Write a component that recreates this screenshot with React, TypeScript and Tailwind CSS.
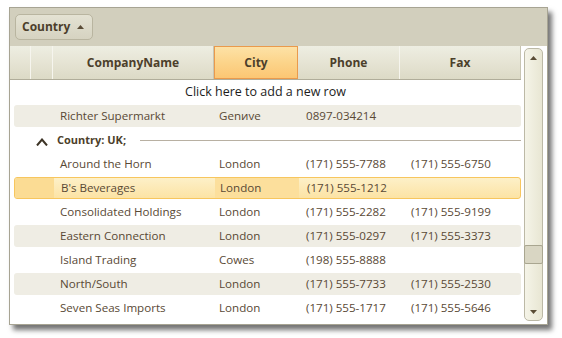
import React from "react";

type Row = { company: string; city: string; phone: string; fax?: string; alt?: boolean; selected?: boolean };

const rows: Row[] = [
  { company: "Around the Horn", city: "London", phone: "(171) 555-7788", fax: "(171) 555-6750" },
  { company: "B's Beverages", city: "London", phone: "(171) 555-1212", selected: true },
  { company: "Consolidated Holdings", city: "London", phone: "(171) 555-2282", fax: "(171) 555-9199" },
  { company: "Eastern Connection", city: "London", phone: "(171) 555-0297", fax: "(171) 555-3373", alt: true },
  { company: "Island Trading", city: "Cowes", phone: "(198) 555-8888" },
  { company: "North/South", city: "London", phone: "(171) 555-7733", fax: "(171) 555-2530", alt: true },
  { company: "Seven Seas Imports", city: "London", phone: "(171) 555-1717", fax: "(171) 555-5646" },
];

const font = { fontFamily: '"Open Sans", "Noto Sans", sans-serif' };

function DataRow({ row }: { row: Row }) {
  let inner = "flex h-[22px] items-center rounded-[3px]";
  if (row.alt) inner += " bg-[#efede4]";
  if (row.selected) inner += " border border-[#f7c65e] bg-gradient-to-b from-[#fdf0c8] to-[#fce3a4]";
  return (
    <div className="h-[24px] py-[1px] pl-[4px]">
      <div className={inner}>
        <div className={`h-full w-[39px] shrink-0 ${row.selected ? "bg-[#fbdc94] rounded-l-[2px]" : ""}`} />
        <div className="w-[161px] shrink-0 pl-[7px] whitespace-nowrap">{row.company}</div>
        <div className={`h-full w-[84px] shrink-0 flex items-center pl-[5px] ${row.selected ? "bg-[#fcdf9c]" : ""}`}>{row.city}</div>
        <div className="w-[102px] shrink-0 pl-[8px] whitespace-nowrap">{row.phone}</div>
        <div className="flex-1 pl-[11px] whitespace-nowrap">{row.fax ?? ""}</div>
      </div>
    </div>
  );
}

export default function App() {
  return (
    <div className="w-[562px] h-[338px] bg-white pl-[9px] pt-[7px]" style={font}>
      <div className="w-[539px] h-[318px] border border-[#a7a493] bg-white flex flex-col shadow-[4px_5px_5px_rgba(0,0,0,0.55)]">
        {/* group panel */}
        <div className="h-[38px] bg-[#d2cfbd] flex items-center px-[5px] shrink-0">
          <div className="h-[26px] w-[78px] rounded-[5px] border border-[#b9b5a0] bg-gradient-to-b from-[#e4e2d3] to-[#d6d3c1] flex items-center pl-[6px] gap-[7px] text-[12px] font-bold text-[#4c3f2b]">
            <span>Country</span>
            <svg width="7" height="4" viewBox="0 0 7 4"><path d="M0 4 L3.5 0 L7 4 Z" fill="#5a4c36" /></svg>
          </div>
        </div>
        <div className="flex flex-1 min-h-0 bg-[#d2cfbd]">
          <div className="w-[511px] flex flex-col bg-white">
            {/* header */}
            <div className="h-[34px] flex border-b border-[#b0ad9a] bg-gradient-to-b from-[#eeeee2] via-[#e6e4d4] to-[#dcdac6] text-[12px] font-bold text-[#4c3f2b]">
              <div className="w-[21px] border-r border-[#f6f5ee]" />
              <div className="w-[22px] border-r border-[#f6f5ee]" />
              <div className="w-[161px] flex items-center justify-center border-r border-[#c8c5b2]">CompanyName</div>
              <div className="w-[84px] flex items-center justify-center border border-[#ea9a4c] bg-gradient-to-b from-[#fde2a6] via-[#fcd48a] to-[#fbc673]">City</div>
              <div className="w-[102px] flex items-center justify-center border-r border-[#f6f5ee]">Phone</div>
              <div className="flex-1 flex items-center justify-center border-r border-[#c8c5b2]">Fax</div>
            </div>
            <div className="flex-1 bg-white text-[11.6px] text-[#594935]">
              <div className="h-[24px] flex items-center justify-center text-[12.5px] text-[#1c1c1c]">Click here to add a new row</div>
              <DataRow row={{ company: "Richter Supermarkt", city: "Genиve", phone: "0897-034214", alt: true }} />
              <div className="h-[24px] flex items-center pl-[26px]">
                <svg width="12" height="8" viewBox="0 0 12 8" className="mt-[3px]"><path d="M1 7.5 L6 1.5 L11 7.5" fill="none" stroke="#3d3426" strokeWidth="2" /></svg>
                <span className="ml-[9px] font-bold text-[11px] text-[#4c3f2b]">Country: UK;</span>
                <div className="ml-[14px] flex-1 h-px bg-[#b8b0a2]" />
              </div>
              {rows.map((r) => (
                <DataRow key={r.company} row={r} />
              ))}
            </div>
          </div>
          {/* scrollbar */}
          <div className="flex-1 bg-white pl-[3px] pr-[3px] pt-[2px] pb-[3px]">
            <div className="h-full w-[19px] rounded-[5px] border border-[#bcb9a6] bg-gradient-to-r from-[#f5f4e8] to-[#e8e6d3] flex flex-col items-center">
              <svg width="7" height="4" viewBox="0 0 7 4" className="mt-[7px]"><path d="M0 4 L3.5 0 L7 4 Z" fill="#5a4c36" /></svg>
              <div className="flex-1" />
              <div className="w-[19px] h-[19px] border border-[#a9a690] bg-[#d9d6c3] rounded-[2px]" />
              <div className="h-[46px]" />
              <svg width="7" height="4" viewBox="0 0 7 4" className="mb-[6px]"><path d="M0 0 L3.5 4 L7 0 Z" fill="#5a4c36" /></svg>
            </div>
          </div>
        </div>
      </div>
    </div>
  );
}
